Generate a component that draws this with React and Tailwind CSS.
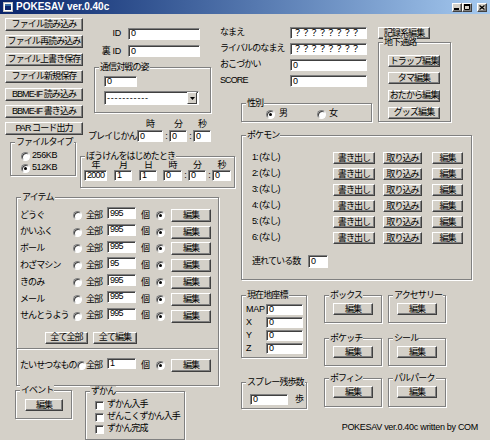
import React from "react"

function Btn({ className = "", children }) {
  return (
    <div className={`flex items-center justify-center shrink-0 whitespace-nowrap leading-none bg-[#d4d0c8] border border-t-white border-l-white border-r-[#404040] border-b-[#404040] shadow-[inset_-1px_-1px_0_#808080] ${className}`}>
      {children}
    </div>
  )
}

function Field({ className = "", children }) {
  return (
    <div className={`flex items-center shrink-0 overflow-hidden whitespace-nowrap leading-none tracking-[-0.7px] pl-[2px] bg-white border border-t-[#808080] border-l-[#808080] border-r-white border-b-white shadow-[inset_1px_1px_0_#404040] ${className}`}>
      {children}
    </div>
  )
}

function Radio({ checked, className = "" }) {
  return (
    <span className={`flex items-center justify-center shrink-0 w-[9px] h-[9px] rounded-full bg-white border border-t-[#808080] border-l-[#808080] border-r-white border-b-white shadow-[inset_1px_1px_0_#404040] ${className}`}>
      {checked && <span className="w-[3px] h-[3px] rounded-full bg-black" />}
    </span>
  )
}

function Check() {
  return (
    <span className="shrink-0 w-[9px] h-[9px] bg-white border border-t-[#808080] border-l-[#808080] border-r-white border-b-white shadow-[inset_1px_1px_0_#404040]" />
  )
}

function Group({ label, className = "", children }) {
  return (
    <div className={`relative shrink-0 border border-[#808080] shadow-[inset_1px_1px_0_#fff,1px_1px_0_#fff] ${className}`}>
      {label && (
        <span className="absolute left-[4px] top-[-6px] px-[1px] bg-[#d4d0c8] leading-[10px] whitespace-nowrap">
          {label}
        </span>
      )}
      {children}
    </div>
  )
}

function Select() {
  return (
    <div className="mt-[4px] flex items-center w-[95px] h-[14px] bg-white border border-t-[#808080] border-l-[#808080] border-r-white border-b-white shadow-[inset_1px_1px_0_#404040]">
      <span className="flex-1 pl-[2px] leading-none tracking-[0.8px]">-----------</span>
      <div className="flex items-center justify-center w-[10px] h-[12px] mr-px bg-[#d4d0c8] border border-t-white border-l-white border-r-[#404040] border-b-[#404040]">
        <svg width="5" height="3" viewBox="0 0 5 3">
          <path d="M0 0h5L2.5 3z" fill="#000" />
        </svg>
      </div>
    </div>
  )
}

function Stack({ label, className = "", labelClass = "h-[12px] leading-[12px]", children }) {
  return (
    <div className={`flex flex-col items-center shrink-0 ${className}`}>
      <span className={labelClass}>{label}</span>
      {children}
    </div>
  )
}

const fileButtons = [
  "ファイル読み込み",
  "ファイル再読み込み",
  "ファイル上書き保存",
  "ファイル新規保存",
  "BBME-IF 読み込み",
  "BBME-IF 書き込み",
  "PAR コード出力",
]

const items = [
  ["どうぐ", "995"],
  ["かいふく", "995"],
  ["ボール", "995"],
  ["わざマシン", "95"],
  ["きのみ", "995"],
  ["メール", "995"],
  ["せんとうよう", "995"],
]

const trainer = [
  ["なまえ", "？？？？？？？？"],
  ["ライバルのなまえ", "？？？？？？？？"],
  ["おこづかい", "0"],
  ["SCORE", "0"],
]

const small = [
  ["ボックス", "アクセサリー", "mt-0 h-[28px]"],
  ["ポケッチ", "シール", "mt-[15px] h-[28px]"],
  ["ポフィン", "パルパーク", "mt-[12px] h-[29px]"],
]

const dateCols = [
  ["年", "2000", "w-[23px]"],
  ["月", "1", "ml-[7px] w-[18px]"],
  ["日", "1", "ml-[7px] w-[18px]"],
  ["時", "0", "ml-[6px] w-[19px]"],
]

function TitleBar() {
  return (
    <div className="h-[14px] flex items-center bg-linear-to-r from-[#0a246a] to-[#a6caf0]">
      <svg className="ml-[3px]" width="10" height="10" viewBox="0 0 10 10">
        <rect width="10" height="10" fill="#c0c0c0" />
        <rect x="1" y="1" width="8" height="8" fill="#fff" />
        <rect x="2" y="2" width="6" height="2" fill="#3a6ea5" />
        <rect x="2" y="4" width="6" height="4" fill="#0a246a" />
      </svg>
      <span className="ml-[3px] text-white font-bold text-[10px] tracking-normal leading-none">POKESAV ver.0.40c</span>
      <div className="ml-auto mr-[3px] flex items-center">
        <Btn className="w-[10px] h-[9px]">
          <svg width="6" height="5" viewBox="0 0 6 5"><rect x="0" y="3" width="5" height="2" fill="#000" /></svg>
        </Btn>
        <Btn className="w-[10px] h-[9px]">
          <svg width="6" height="6" viewBox="0 0 6 6"><path d="M0.5 1.5h5v4h-5z" fill="none" stroke="#000" /><rect x="0" y="0" width="6" height="2" fill="#000" /></svg>
        </Btn>
        <Btn className="ml-[5px] w-[10px] h-[9px]">
          <svg width="6" height="5" viewBox="0 0 6 5"><path d="M0.5 0.5l5 4M5.5 0.5l-5 4" stroke="#000" strokeWidth="1.3" /></svg>
        </Btn>
      </div>
    </div>
  )
}

function LeftPart() {
  return (
    <div className="w-[220px] shrink-0 flex flex-col">
      <div className="flex items-start">
        <div className="ml-[5px] mt-[4px] w-[78px] flex flex-col gap-[4.4px]">
          {fileButtons.map((t) => (
            <Btn key={t} className="w-[78px] h-[13px]">{t}</Btn>
          ))}
        </div>
        <div className="ml-[5px] w-[132px] flex flex-col">
          <div className="mt-[13px] flex items-center">
            <span className="w-[33px] text-right tracking-[-0.3px]">ID</span>
            <Field className="ml-[7px] w-[72px] h-[12px]">0</Field>
          </div>
          <div className="mt-[4px] flex items-center">
            <span className="w-[33px] text-right whitespace-nowrap tracking-[-0.3px]">裏 ID</span>
            <Field className="ml-[7px] w-[72px] h-[12px]">0</Field>
          </div>
          <Group label="通信対戦の姿" className="mt-[9px] ml-[6px] w-[117px] h-[46px]">
            <div className="pl-[9px] pt-[8px] flex flex-col">
              <Field className="w-[33px] h-[11px]">0</Field>
              <Select />
            </div>
          </Group>
          <div className="mt-[5px] flex items-end">
            <span className="w-[49px] leading-[12px] whitespace-nowrap">プレイじかん</span>
            <Stack label="時" className="w-[26px]"><Field className="w-[26px] h-[12px]">0</Field></Stack>
            <span className="w-[6px] text-center leading-[12px]">:</span>
            <Stack label="分" className="w-[18px]"><Field className="w-[18px] h-[12px]">0</Field></Stack>
            <span className="w-[6px] text-center leading-[12px]">:</span>
            <Stack label="秒" className="w-[18px]"><Field className="w-[18px] h-[12px]">0</Field></Stack>
          </div>
        </div>
      </div>

      <div className="flex items-start">
        <Group label="ファイルタイプ" className="ml-[10px] w-[66px] h-[34px]">
          <div className="pl-[10px] pt-[7px] flex flex-col tracking-[-0.4px]">
            <div className="h-[12px] flex items-center gap-[2px]">
              <Radio />
              <span>256KB</span>
            </div>
            <div className="h-[12px] flex items-center gap-[2px]">
              <Radio checked />
              <span>512KB</span>
            </div>
          </div>
        </Group>
        <Group label="ぼうけんをはじめたとき" className="ml-[4px] mt-[14px] w-[155px] h-[32px]">
          <div className="pl-[3px] pt-[4px] flex items-end">
            {dateCols.map(([l, v, c]) => (
              <Stack key={l} label={l} className={c} labelClass="h-[9px] leading-[9px]">
                <Field className="w-full h-[11px]">{v}</Field>
              </Stack>
            ))}
            <span className="w-[6px] text-center leading-[11px]">:</span>
            <Stack label="分" className="w-[18px]" labelClass="h-[9px] leading-[9px]"><Field className="w-[18px] h-[11px]">0</Field></Stack>
            <span className="w-[6px] text-center leading-[11px]">:</span>
            <Stack label="秒" className="w-[19px]" labelClass="h-[9px] leading-[9px]"><Field className="w-[19px] h-[11px]">0</Field></Stack>
          </div>
        </Group>
      </div>

      <Group label="アイテム" className="mt-[9px] ml-[16px] w-[203px] h-[189px]">
        <div className="pt-[9px] flex flex-col">
          {items.map(([name, n]) => (
            <div key={name} className="h-[16.8px] flex items-center pl-[3px]">
              <span className="w-[53px] whitespace-nowrap">{name}</span>
              <Radio />
              <span className="ml-[4px] w-[21px]">全部</span>
              <Field className="self-start w-[29px] h-[12px]">{n}</Field>
              <span className="ml-[5px] w-[14px]">個</span>
              <Radio checked className="ml-[1px]" />
              <Btn className="ml-[6px] w-[40px] h-[13px]">編集</Btn>
            </div>
          ))}
          <div className="mt-[7px] flex items-center pl-[28px]">
            <Btn className="w-[43px] h-[12px]">全て全部</Btn>
            <Btn className="ml-[5px] w-[44px] h-[12px]">全て編集</Btn>
          </div>
          <div className="mt-[4px] border-t border-t-[#808080] border-b border-b-white" />
          <div className="mt-[8px] h-[16px] flex items-center pl-[3px]">
            <span className="w-[57px] whitespace-nowrap">たいせつなもの</span>
            <Radio />
            <span className="w-[21px]">全部</span>
            <Field className="self-start w-[29px] h-[11px]">1</Field>
            <span className="ml-[5px] w-[14px]">個</span>
            <Radio checked className="ml-[1px]" />
            <Btn className="ml-[6px] w-[40px] h-[13px]">編集</Btn>
          </div>
        </div>
      </Group>

      <div className="mt-[4px] flex items-start">
        <Group label="イベント" className="ml-[15px] w-[57px] h-[29px]">
          <Btn className="ml-[9px] mt-[8px] w-[38px] h-[12px]">編集</Btn>
        </Group>
        <Group label="ずかん" className="ml-[13px] mt-[1px] w-[100px] h-[49px]">
          <div className="pl-[9px] pt-[7px] flex flex-col">
            {["ずかん入手", "ぜんこくずかん入手", "ずかん完成"].map((t) => (
              <div key={t} className="h-[12px] flex items-center">
                <Check />
                <span className="ml-[3px] whitespace-nowrap">{t}</span>
              </div>
            ))}
          </div>
        </Group>
      </div>
    </div>
  )
}

function RightPart() {
  return (
    <div className="flex-1 flex flex-col">
      <div className="flex items-start">
        <div className="w-[152px] shrink-0 flex flex-col">
          {trainer.map(([label, value], i) => (
            <div key={label} className={`h-[12px] flex items-center ${i === 0 ? "mt-[13px]" : "mt-[4px]"}`}>
              <span className="w-[70px] whitespace-nowrap">{label}</span>
              <Field className="w-[77px] h-[12px]">{value}</Field>
            </div>
          ))}
          <Group label="性別" className="mt-[16px] ml-[21px] w-[131px] h-[19px]">
            <div className="mt-[4px] h-[12px] flex items-center pl-[24px]">
              <Radio checked />
              <span className="ml-[4px]">男</span>
              <Radio className="ml-[30px]" />
              <span className="ml-[3px]">女</span>
            </div>
          </Group>
        </div>
        <div className="ml-[6px] flex flex-col">
          <Btn className="mt-[13px] w-[52px] h-[12px]">記録系編集</Btn>
          <Group label="地下通路" className="mt-[3px] w-[73px] h-[80px]">
            <div className="pl-[9px] pt-[12px] flex flex-col gap-[5.3px]">
              {["トラップ編集", "タマ編集", "おたから編集", "グッズ編集"].map((t) => (
                <Btn key={t} className="w-[52px] h-[12px]">{t}</Btn>
              ))}
            </div>
          </Group>
        </div>
      </div>

      <Group label="ポケモン" className="mt-[13px] ml-[21px] w-[231px] h-[145px]">
        <div className="pl-[10px] pt-[16px] flex flex-col gap-[4px]">
          {[1, 2, 3, 4, 5, 6].map((n) => (
            <div key={n} className="h-[12px] flex items-center">
              <span className="w-[81px] whitespace-nowrap">{n}: (なし)</span>
              <Btn className="w-[42px] h-[12px]">書き出し</Btn>
              <Btn className="ml-[8px] w-[39px] h-[12px]">取り込み</Btn>
              <Btn className="ml-[10px] w-[31px] h-[12px]">編集</Btn>
            </div>
          ))}
          <div className="mt-[7px] h-[13px] flex items-center">
            <span className="w-[56px] whitespace-nowrap">連れている数</span>
            <Field className="w-[20px] h-[13px]">0</Field>
          </div>
        </div>
      </Group>

      <div className="mt-[15px] flex items-start">
        <div className="ml-[21px] w-[66px] shrink-0 flex flex-col">
          <Group label="現在地座標" className="w-[66px] h-[63px]">
            <div className="pl-[4px] pt-[8px] flex flex-col gap-[2px] tracking-[-0.3px]">
              {["MAP", "X", "Y", "Z"].map((t) => (
                <div key={t} className="h-[11px] flex items-center">
                  <span className="w-[20px]">{t}</span>
                  <Field className="w-[37px] h-[11px]">0</Field>
                </div>
              ))}
            </div>
          </Group>
          <Group label="スプレー残歩数" className="mt-[24px] w-[66px] h-[27px]">
            <div className="pl-[8px] pt-[10px] flex items-center">
              <Field className="w-[38px] h-[11px]">0</Field>
              <span className="ml-[7px]">歩</span>
            </div>
          </Group>
        </div>
        <div className="ml-[17px] flex flex-col">
          {small.map(([a, b, row]) => (
            <div key={a} className={`flex gap-[6px] ${row}`}>
              {[a, b].map((t) => (
                <Group key={t} label={t} className="w-[58px] h-full">
                  <Btn className="ml-[8px] mt-[7px] w-[40px] h-[12px]">編集</Btn>
                </Group>
              ))}
            </div>
          ))}
        </div>
      </div>

      <div className="mt-[12px] pr-[12px] text-right leading-[12px] tracking-[-0.3px] whitespace-nowrap">
        POKESAV ver.0.40c written by COM
      </div>
    </div>
  )
}

export default function App() {
  return (
    <div className="w-[490px] h-[440px] overflow-hidden bg-[#d4d0c8] text-black text-[9px] tracking-[-0.9px] font-['Liberation_Sans','Noto_Sans_CJK_JP',sans-serif]">
      <TitleBar />
      <div className="flex items-start">
        <LeftPart />
        <RightPart />
      </div>
    </div>
  )
}
